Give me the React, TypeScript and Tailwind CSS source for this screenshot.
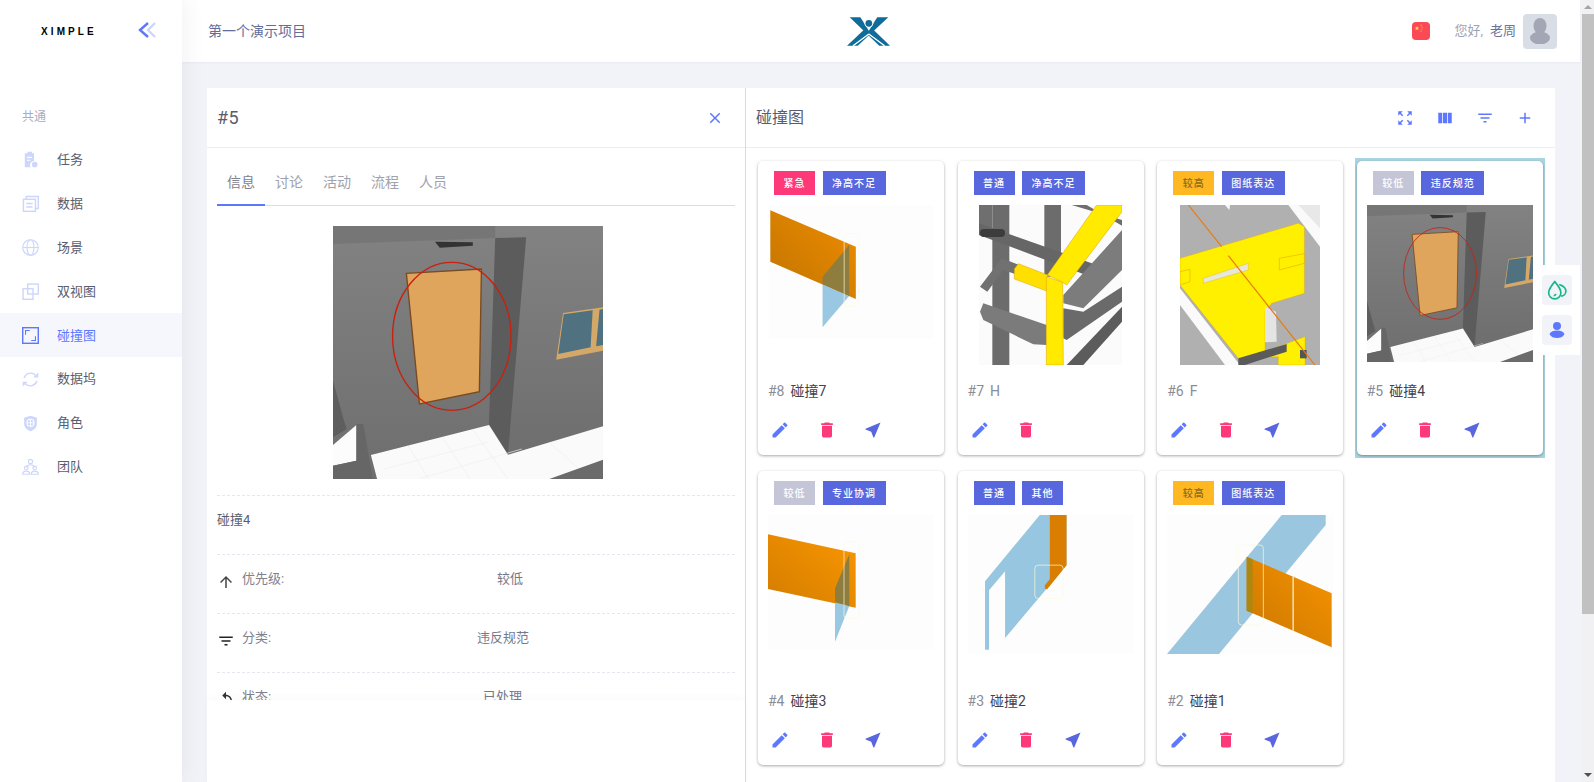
import React from "react";
import { MdAdd, MdArrowUpward, MdClose, MdDelete, MdEdit, MdFilterList, MdNearMe, MdReplay, MdViewColumn, MdZoomOutMap } from "react-icons/md";

const FONT = "font-['Roboto','Noto_Sans_CJK_SC',sans-serif]";

function DoorScene({ className }: { className: string }) {
  return (
    <svg className={className} viewBox="372 411 784 759" preserveAspectRatio="none">
      <defs>
        <linearGradient id="wall" x1="0" y1="0" x2="0" y2="1">
          <stop offset="0" stopColor="#828282" />
          <stop offset="1" stopColor="#6e6e6e" />
        </linearGradient>
      </defs>
      <rect x="372" y="411" width="784" height="759" fill="url(#wall)" />
      <polygon points="372,411 843,411 843,447 372,465" fill="#767676" />
      <polygon points="668,458 778,460 778,470 682,476" fill="#333" />
      <polygon points="933,411 1156,411 1156,1010 880,1095 933,445" fill="url(#wall)" />
      <polygon points="843,447 933,445 880,1095 825,1005" fill="#5c5c5c" />
      <polygon points="585,553 803,540 797,908 623,945" fill="#e0a55c" stroke="#7a4a20" strokeWidth="4" />
      <polygon points="1040,672 1156,655 1156,785 1020,812" fill="#d4a868" />
      <polygon points="1042,676 1126,664 1120,775 1026,795" fill="#50717f" />
      <polygon points="1146,662 1156,660 1156,768 1136,772" fill="#50717f" />
      <polygon points="482,1098 825,1008 880,1097 1156,1012 1156,1170 500,1170" fill="#fafafa" />
      <path d="M590 1070l60 100M690 1045l80 125M780 1025l100 145M1000 1060l120 110M520 1140l300-80M620 1170l300-90" stroke="#eeeeee" strokeWidth="2" fill="none" />
      <polygon points="1000,1170 1156,1112 1156,1170" fill="#6b6b6b" />
      <polygon points="372,875 405,1000 412,1020 372,1045" fill="#5e5e5e" />
      <polygon points="372,1068 440,1008 440,1115 372,1130" fill="#fcfcfc" />
      <polygon points="440,1005 460,1005 487,1170 372,1170 372,1130 440,1115" fill="#666" />
      <ellipse cx="717" cy="742" rx="172" ry="222" fill="none" stroke="#c9200f" strokeWidth="4" />
    </svg>
  );
}

function Img8() {
  return (
    <svg className="w-[165px] h-[134px]" viewBox="54 150 496 402">
      <defs>
        <linearGradient id="o8" x1="0" y1="1" x2="1" y2="0">
          <stop offset="0" stopColor="#c07400" />
          <stop offset="1" stopColor="#f08c00" />
        </linearGradient>
      </defs>
      <rect x="54" y="150" width="496" height="402" fill="#fdfdfd" />
      <polygon points="58,165 315,275 315,432 58,320" fill="url(#o8)" />
      <polygon points="215,388 295,423 215,517" fill="#9ac8e2" />
      <polygon points="215,365 295,270 295,423 215,388" fill="#8e7d3d" />
      <rect x="280" y="235" width="42" height="220" rx="8" fill="none" stroke="#fdfbe0" strokeWidth="2" />
    </svg>
  );
}

function Img7() {
  return (
    <svg className="w-[143px] h-[160px]" viewBox="687 150 429 480">
      <rect x="687" y="150" width="429" height="480" fill="#fbfbfb" />
      <polygon points="965,150 1116,195 1116,212 1010,150" fill="#6e6e6e" />
      <rect x="727" y="150" width="51" height="480" fill="#6c6c6c" />
      <rect x="687" y="150" width="40" height="70" fill="#6f6f6f" />
      <rect x="883" y="150" width="50" height="215" fill="#6c6c6c" />
      <polygon points="687,205 1040,330 1040,372 687,240" fill="#666" />
      <rect x="690" y="222" width="75" height="24" rx="11" fill="#3c3c3c" />
      <polygon points="1116,225 1116,345 1000,460 940,445 940,420" fill="#7c7c7c" />
      <polygon points="940,460 1000,470 1116,395 1116,440 950,555 940,550" fill="#6a6a6a" />
      <polygon points="690,395 755,310 890,360 890,390 760,345 712,410" fill="#717171" />
      <polygon points="690,470 700,445 890,510 890,570 850,568 700,495" fill="#7b7b7b" />
      <polygon points="1116,455 950,630 1000,630 1116,500" fill="#5c5c5c" />
      <polygon points="892,360 1040,150 1116,150 1116,170 950,390 935,380" fill="#ffea00" stroke="#e0a000" strokeWidth="1.5" />
      <polygon points="793,342 805,326 893,360 890,408 793,372" fill="#ffdf00" stroke="#e0a000" strokeWidth="1.5" />
      <polygon points="889,365 938,382 940,630 889,630" fill="#ffea00" stroke="#e0a000" strokeWidth="1.5" />
    </svg>
  );
}

function Img6() {
  return (
    <svg className="w-[140px] h-[160px]" viewBox="90 150 420 480">
      <rect x="90" y="150" width="420" height="480" fill="#b0b0b0" />
      <polygon points="415,150 510,150 510,275" fill="#fafafa" />
      <polygon points="445,150 510,150 510,220" fill="#e8e8e8" />
      <polygon points="225,150 240,150 238,165" fill="#fafafa" />
      <polygon points="90,400 90,450 225,630 270,630" fill="#fafafa" />
      <polygon points="90,310 445,205 463,215 463,415 365,445 345,470 345,590 465,545 465,630 385,630 385,605 265,610 90,390" fill="#fff000" stroke="#f0a000" strokeWidth="1" />
      <polygon points="345,455 378,470 380,560 345,562" fill="#e4e4e4" />
      <polygon points="160,370 295,325 295,345 160,385" fill="#e8e8d8" stroke="#e0a000" strokeWidth="1" />
      <polygon points="388,310 463,296 463,325 388,345" fill="#fff000" stroke="#e0a000" strokeWidth="1.5" />
      <polygon points="90,350 120,343 120,380 90,390" fill="#fff000" stroke="#e0a000" strokeWidth="1.5" />
      <polygon points="265,610 410,567 410,590 285,630 265,630" fill="#5a5a5a" />
      <rect x="450" y="585" width="20" height="25" fill="#555" />
      <path d="M115 150 L215 275 M235 302 L495 630" stroke="#e87a10" strokeWidth="3.5" fill="none" />
    </svg>
  );
}

function Img4() {
  return (
    <svg className="w-[166px] h-[134px]" viewBox="54 150 498 402">
      <defs>
        <linearGradient id="o4" x1="0" y1="1" x2="1" y2="0">
          <stop offset="0" stopColor="#d27c00" />
          <stop offset="1" stopColor="#fb9700" />
        </linearGradient>
      </defs>
      <rect x="54" y="150" width="498" height="402" fill="#fdfdfd" />
      <polygon points="54,208 317,265 317,428 54,372" fill="url(#o4)" />
      <polygon points="255,412 298,423 255,530" fill="#9ac8e2" />
      <polygon points="255,370 298,268 298,423 255,412" fill="#8e7d3d" />
      <rect x="282" y="230" width="46" height="230" rx="8" fill="none" stroke="#fdfbe0" strokeWidth="2" />
    </svg>
  );
}

function Img3() {
  return (
    <svg className="w-[166px] h-[138px]" viewBox="655 150 497 413">
      <rect x="655" y="150" width="497" height="413" fill="#fdfdfd" />
      <polygon points="870,150 950,150 950,300 766,518 766,318 718,375 718,553 706,553 706,348" fill="#96c6e0" />
      <polygon points="900,150 950,150 950,300 892,372 885,370 885,360 900,342" fill="#d97e00" />
      <rect x="855" y="300" width="85" height="100" rx="10" fill="none" stroke="#fdfbe0" strokeWidth="2" />
    </svg>
  );
}

function Img2() {
  return (
    <svg className="w-[166px] h-[139px]" viewBox="51 150 498 417">
      <defs>
        <linearGradient id="o2" x1="0" y1="1" x2="1" y2="0">
          <stop offset="0" stopColor="#c97600" />
          <stop offset="1" stopColor="#f89400" />
        </linearGradient>
      </defs>
      <rect x="51" y="150" width="498" height="417" fill="#fdfdfd" />
      <polygon points="395,150 527,150 527,180 207,567 51,567" fill="#9bc6df" />
      <polygon points="290,275 545,385 545,547 290,437" fill="url(#o2)" />
      <polygon points="290,275 308,283 308,445 290,437" fill="#ad8710" />
      <polygon points="427,334 432,336 432,498 427,496" fill="#f3d6a6" />
      <rect x="265" y="240" width="75" height="240" rx="10" fill="none" stroke="#fdfbe0" strokeWidth="2" />
    </svg>
  );
}

const TAG: Record<string, string> = {
  紧急: "bg-[#fd397a] text-white",
  普通: "bg-[#5867dd] text-white",
  较高: "bg-[#ffb822] text-[#8a6a1c]",
  较低: "bg-[#c4c5d6] text-white",
};

function Tag({ label, cls }: { label: string; cls: string }) {
  return <span className={`h-6 px-[9.5px] flex items-center text-[10px] tracking-[1px] font-medium whitespace-nowrap ${cls}`}>{label}</span>;
}

type CardData = { p: string; c: string; id: string; name: string; dim?: boolean; img: React.ReactNode; nav?: boolean; sel?: boolean };

const CARDS: CardData[] = [
  { p: "紧急", c: "净高不足", id: "#8", name: "碰撞7", img: <Img8 />, nav: true },
  { p: "普通", c: "净高不足", id: "#7", name: "H", dim: true, img: <Img7 /> },
  { p: "较高", c: "图纸表达", id: "#6", name: "F", dim: true, img: <Img6 />, nav: true },
  { p: "较低", c: "违反规范", id: "#5", name: "碰撞4", img: <DoorScene className="w-[166px] h-[157px]" />, nav: true, sel: true },
  { p: "较低", c: "专业协调", id: "#4", name: "碰撞3", img: <Img4 />, nav: true },
  { p: "普通", c: "其他", id: "#3", name: "碰撞2", img: <Img3 />, nav: true },
  { p: "较高", c: "图纸表达", id: "#2", name: "碰撞1", img: <Img2 />, nav: true },
];

function Card({ d }: { d: CardData }) {
  const body = (
    <div className="h-[294px] bg-white rounded-[5px] shadow-[0_1px_3px_rgba(0,0,0,0.35)] flex flex-col">
      <div className="flex gap-[7.5px] pl-4 pt-[10px]">
        <Tag label={d.p} cls={TAG[d.p]} />
        <Tag label={d.c} cls="bg-[#5867dd] text-white" />
      </div>
      <div className="h-[160px] mt-[10px] flex justify-center items-start overflow-hidden">{d.img}</div>
      <div className="mt-[16px] pl-[10px] h-5 flex items-center gap-[6px] text-sm">
        <span className="text-[#8a8c96]">{d.id}</span>
        <span className={d.dim ? "text-[#8a8c96]" : "text-[#3f4254]"}>{d.name}</span>
      </div>
      <div className="mt-[19px] pl-[12px] flex items-center gap-[26.5px] text-[20px]">
        <MdEdit className="text-[#5d78ff]" />
        <MdDelete className="text-[#fd397a]" />
        {d.nav && <MdNearMe className="text-[#5867dd]" />}
      </div>
    </div>
  );
  if (d.sel) return <div className="-mx-[2px] -my-[3px] px-[2px] py-[3px] bg-[#a9d5e2]">{body}</div>;
  return body;
}

const ic = { fill: "none", stroke: "currentColor", strokeWidth: 2 } as const;
const NAV: { label: string; active?: boolean; icon: React.ReactNode }[] = [
  { label: "任务", icon: <g fill="currentColor"><path d="M4 3h4V1h6v2h3v11a6 6 0 0 0-5 9H4z" /><circle cx="18" cy="19" r="4" /><path d="M7 9h7M7 13h5" stroke="#fff" strokeWidth="1.6" /></g> },
  { label: "数据", icon: <g {...ic}><rect x="2" y="6" width="17" height="17" /><path d="M6 6V2h17v17h-4M6 12h9M6 17h9" /></g> },
  { label: "场景", icon: <g {...ic} strokeWidth={1.6}><circle cx="12" cy="12" r="11" /><ellipse cx="12" cy="12" rx="5" ry="11" /><path d="M1 12h22" /></g> },
  { label: "双视图", icon: <g {...ic}><rect x="1.5" y="8" width="14" height="15" /><rect x="8" y="1.5" width="15" height="14" /></g> },
  { label: "碰撞图", active: true, icon: <g {...ic}><rect x="1" y="1" width="22" height="22" strokeWidth="2" /><path d="M5 11V5h6M19 13v6h-6" strokeWidth="1.5" /></g> },
  { label: "数据坞", icon: <g {...ic}><path d="M3 10a9.5 9.5 0 0 1 16-4M21 14a9.5 9.5 0 0 1-16 4" /><path d="M23 2v7h-7zM1 22v-7h7z" fill="currentColor" stroke="none" /></g> },
  { label: "角色", icon: <g><path d="M12 1l9 3v8c0 6-4 9-9 11-5-2-9-5-9-11V4z" fill="currentColor" /><circle cx="12" cy="11" r="5" fill="none" stroke="#fff" strokeWidth="1.5" /><path d="M7 11h10M12 6v10" stroke="#fff" strokeWidth="1.3" /></g> },
  { label: "团队", icon: <g {...ic} strokeWidth={1.6}><circle cx="12" cy="5" r="3" /><path d="M7 14c0-6 10-6 10 0" /><circle cx="6" cy="14" r="2.6" /><circle cx="18" cy="14" r="2.6" /><path d="M1 23c0-6 10-6 10 0zM13 23c0-6 10-6 10 0z" /></g> },
];

function Sidebar() {
  return (
    <aside className="w-[182px] h-full bg-white shrink-0 z-10 shadow-[0_0_22px_rgba(82,63,105,0.09)]">
      <div className="h-[62px] flex items-center pl-[41px]">
        <span className="w-[72px] text-[10px] font-bold tracking-[3.1px] text-black font-['Liberation_Sans',sans-serif]">XIMPLE</span>
        <svg className="w-[18px] h-[16px] ml-[25px] -mt-[2px]" viewBox="0 0 18 16" fill="none" strokeWidth="2.4">
          <path d="M17 1l-7 7 7 7" stroke="#cdd6ff" />
          <path d="M10 1L2 8l8 7" stroke="#5d78ff" />
        </svg>
      </div>
      <div className="mt-[47px] pl-[22px] text-xs leading-4 text-[#a7abc3]">共通</div>
      <nav className="mt-[13px]">
        {NAV.map((n) => (
          <div key={n.label} className={`h-[43.86px] pl-[22px] flex items-center gap-[18px] text-[13px] ${n.active ? "bg-[#f6f7fd] text-[#5d78ff]" : "text-[#595d6e]"}`}>
            <svg className={`w-[17px] h-[17px] ${n.active ? "text-[#5d78ff]" : "text-[#cdd6fb]"}`} viewBox="0 0 24 24">{n.icon}</svg>
            <span>{n.label}</span>
          </div>
        ))}
      </nav>
    </aside>
  );
}

function Logo() {
  return (
    <svg className="w-[43px] h-[29px]" viewBox="22 18 128 85">
      <polygon points="30,18 62,18 150,103 118,103" fill="#0f6b99" />
      <polygon points="145,18 112,18 22,103 54,103" fill="#0f6b99" />
      <polygon points="62,18 112,18 87,58" fill="#fff" />
      <path d="M87 68L40 103M87 68l47 35" stroke="#fff" strokeWidth="4" fill="none" />
      <circle cx="87" cy="36" r="13" fill="#fff" />
      <circle cx="87" cy="36" r="10" fill="#0f6b99" />
    </svg>
  );
}

function Header() {
  return (
    <header className="h-[62px] bg-white flex items-center shrink-0 shadow-[0_1px_2px_rgba(82,63,105,0.05)] mr-[2px]">
      <div className="w-[665px] pl-[26px] text-sm text-[#646c9a]">第一个演示项目</div>
      <Logo />
      <div className="ml-auto mr-[23px] flex items-center">
        <svg className="w-[18px] h-[18px] rounded-[4px]" viewBox="0 0 18 18">
          <rect width="18" height="18" fill="#fb4a55" />
          <path d="M5 4l.6 1.6H7.3L6 6.6l.5 1.6L5 7.2l-1.5 1L4 6.6 2.7 5.6h1.700z" fill="#ffd84a" />
          <circle cx="9" cy="3" r=".6" fill="#ffd84a" /><circle cx="10" cy="5" r=".6" fill="#ffd84a" /><circle cx="10" cy="7" r=".6" fill="#ffd84a" /><circle cx="9" cy="9" r=".6" fill="#ffd84a" />
        </svg>
        <span className="ml-[24px] text-[13px] text-[#a0a3b5]">您好,</span>
        <span className="ml-[7px] text-[13px] font-normal text-[#6c7293]">老周</span>
        <div className="ml-[7px] w-[34px] h-[35px] rounded-[4px] bg-[#d9dde6] flex items-center justify-center">
          <svg className="w-[22px] h-[26px]" viewBox="0 0 22 26" fill="#a3a6b4">
            <ellipse cx="11" cy="8" rx="6.5" ry="8" />
            <ellipse cx="11" cy="20" rx="10" ry="6.5" />
          </svg>
        </div>
      </div>
    </header>
  );
}

const ROWS = [
  { icon: <MdArrowUpward className="text-[#444] text-lg mt-1" />, label: "优先级:", w: "w-[255px]", value: "较低" },
  { icon: <MdFilterList className="text-[#222] text-lg mt-1" />, label: "分类:", w: "w-[235px]", value: "违反规范" },
  { icon: <MdReplay className="text-[#333] text-lg mt-1" />, label: "状态:", w: "w-[241px]", value: "已处理" },
];

function DetailPanel() {
  return (
    <section className="w-[539px] shrink-0 border-r border-[#d9d9df] flex flex-col">
      <div className="h-[60px] shrink-0 border-b border-[#ebedf2] flex items-center justify-between pl-[10px] pr-[21px]">
        <span className="text-lg tracking-[0.5px] text-[#595d6e]">#5</span>
        <MdClose className="text-[#5d78ff] text-lg" />
      </div>
      <div className="h-[552px] shrink-0 overflow-hidden px-[10px]">
        <div className="h-[58px] flex items-end border-b border-[#d8dcec] text-sm text-[#a0a2ab]">
          {["信息", "讨论", "活动", "流程", "人员"].map((t, i) => (
            <span key={t} className={`pl-[10px] h-[34px] -mb-px w-12 box-border whitespace-nowrap ${i === 0 ? "border-b-2 border-[#5d78ff] text-[#7e818e]" : ""}`}>{t}</span>
          ))}
        </div>
        <div className="mt-5 pr-[17px] flex justify-center">
          <DoorScene className="w-[270px] h-[253px]" />
        </div>
        <div className="mt-[16px] h-[59px] border-t border-dashed border-[#e6e7ee] pt-[14px] text-[13px] leading-5 text-[#595d6e]">碰撞4</div>
        {ROWS.map((r) => (
          <div key={r.label} className="h-[59px] border-t border-dashed border-[#e6e7ee] pt-[14px] flex items-start text-[13px] leading-5 text-[#7e818e]">
            <span className="w-[25px] flex">{r.icon}</span>
            <span className={r.w}>{r.label}</span>
            <span className="text-[#74788d]">{r.value}</span>
          </div>
        ))}
      </div>
      <div className="flex-1 shadow-[0_-3px_8px_rgba(0,0,0,0.025)]" />
    </section>
  );
}

function CardsPanel() {
  return (
    <section className="flex-1 min-w-0 flex flex-col">
      <div className="h-[60px] shrink-0 border-b border-[#ebedf2] flex items-center pl-[10px]">
        <span className="text-base text-[#595d6e]">碰撞图</span>
        <div className="ml-auto mr-[21px] flex items-center gap-[22px] text-lg text-[#5d78ff]">
          <MdZoomOutMap />
          <MdViewColumn />
          <MdFilterList />
          <MdAdd />
        </div>
      </div>
      <div className="grid grid-cols-4 gap-x-[13.3px] gap-y-4 px-3 pt-[13px]">
        {CARDS.map((c) => <Card key={c.id} d={c} />)}
      </div>
    </section>
  );
}

function Floating() {
  return (
    <div className="absolute left-[1533px] top-[265px] w-[47px] h-[90px] bg-white flex flex-col items-center justify-center gap-[10px] z-20">
      <div className="w-[30px] h-[30px] rounded-[4px] bg-[#f2f3f8] flex items-center justify-center">
        <svg className="w-[20px] h-[20px]" viewBox="0 0 18 18" fill="none" stroke="#14b88a" strokeWidth="1.5">
          <path d="M7 1.5c3 3.5 5.5 6.5 5.5 10a5.500 5.500 0 0 1-11 0c0-3.500 2.500-6.500 5.500-10z" />
          <path d="M11 4c3 1 6 3 6 6 0 2.500-2 4.500-4.500 4.500" />
          <path d="M8 12.500a2 2 0 0 1-2 1.500" />
        </svg>
      </div>
      <div className="w-[30px] h-[30px] rounded-[4px] bg-[#f2f3f8] flex items-center justify-center">
        <svg className="w-[18px] h-[18px]" viewBox="0 0 18 18" fill="#5d78ff">
          <circle cx="9" cy="5" r="4" />
          <path d="M1.500 13c1.500-3 4-3.500 7.500-3.500s6 .5 7.500 3.500c-1.500 3-4.500 4-7.500 4s-6-1-7.500-4z" />
        </svg>
      </div>
    </div>
  );
}

function Scrollbar() {
  return (
    <div className="w-3 shrink-0 h-full bg-[#f1f1f3] flex flex-col items-center">
      <div className="h-[14px] flex items-center justify-center text-[#a3a3a3]">
        <svg className="w-2 h-1" viewBox="0 0 8 4" fill="currentColor"><path d="M4 0l4 4H0z" /></svg>
      </div>
      <div className="w-full h-[600px] bg-[#c1c1c1]" />
      <div className="mt-auto h-[14px] flex items-center justify-center text-[#505050]">
        <svg className="w-2 h-1" viewBox="0 0 8 4" fill="currentColor"><path d="M0 0h8L4 4z" /></svg>
      </div>
    </div>
  );
}

export default function App() {
  return (
    <div className={`relative w-[1594px] h-[782px] overflow-hidden flex bg-[#f2f3f8] ${FONT}`}>
      <Sidebar />
      <main className="flex-1 min-w-0 flex flex-col">
        <Header />
        <div className="flex-1 min-h-0 pt-[26px] pl-[25px] pr-[27px]">
          <div className="h-[700px] bg-white flex">
            <DetailPanel />
            <CardsPanel />
          </div>
        </div>
      </main>
      <Scrollbar />
      <Floating />
    </div>
  );
}
